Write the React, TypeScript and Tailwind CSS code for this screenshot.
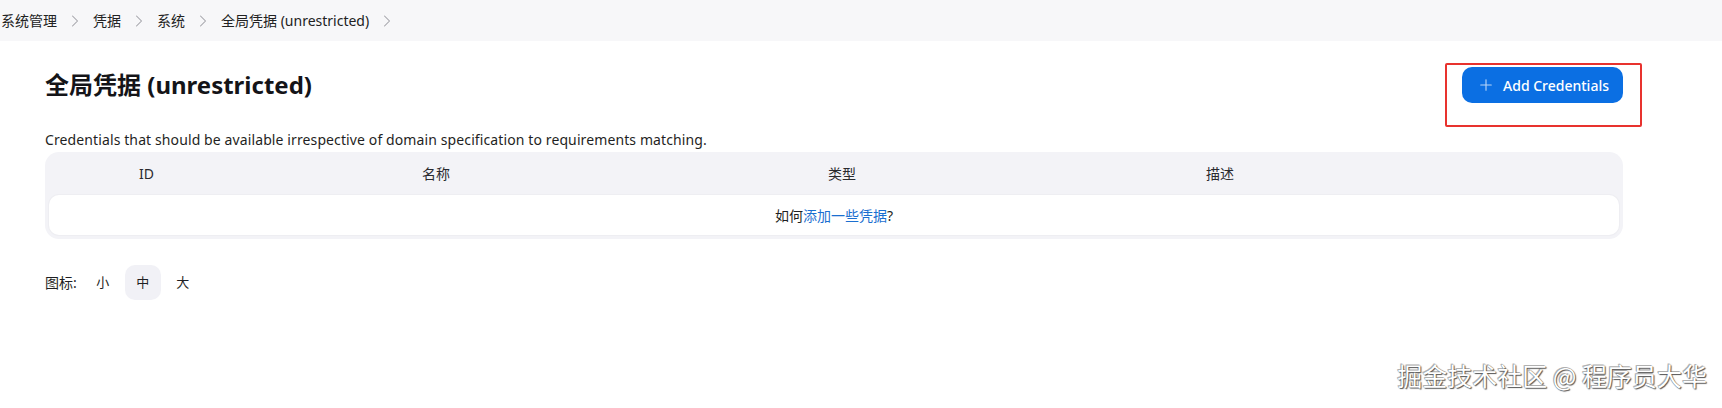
import React from "react";
import { ChevronRight, Plus } from "lucide-react";

const crumbs = ["系统管理", "凭据", "系统", "全局凭据 (unrestricted)"];

export default function App() {
  return (
    <div
      className="relative w-full h-[408px] bg-white text-[#1f1f23] overflow-hidden"
      style={{ fontFamily: '"Noto Sans", "Noto Sans CJK SC", sans-serif' }}
    >
      {/* breadcrumb */}
      <div className="h-[41px] bg-[#f7f7f9] flex items-center gap-2 pl-[1px] text-[14px] text-[#222]">
        {crumbs.map((c) => (
          <React.Fragment key={c}>
            <span className="leading-none">{c}</span>
            <ChevronRight size={20} strokeWidth={1.25} className="text-[#a0a0a6]" />
          </React.Fragment>
        ))}
      </div>

      <div className="pl-[45px] pr-[99px]">
        {/* heading row */}
        <div className="flex items-start justify-between pt-[26px]">
          <h1 className="text-[24px] font-bold leading-[36px] text-[#141418]">
            全局凭据 (unrestricted)
          </h1>
          <div className="relative">
            <button className="h-[36px] rounded-[10px] bg-[#0b6fe3] flex items-center pl-[15px] pr-[14px] gap-2 text-white text-[14px] font-medium">
              <Plus size={18} strokeWidth={1.5} className="text-[#b9d6f8]" />
              <span>Add Credentials</span>
            </button>
            <div className="absolute left-[-17px] right-[-19px] top-[-4px] bottom-[-24px] border-2 border-[#e8322e] rounded-[2px] pointer-events-none" />
          </div>
        </div>

        {/* description */}
        <p className="mt-[27px] text-[14px] leading-[20px] tracking-[0.11px] text-[#1f1f23]">
          Credentials that should be available irrespective of domain specification to requirements matching.
        </p>

        {/* table */}
        <div className="mt-[2px] rounded-[14px] bg-[#f3f3f7] px-[4px] pb-[4px]">
          <div className="h-[43px] grid grid-cols-[90px_283px_406px_378px_1fr] items-center text-[14px] text-[#2a2a2e]">
            <div />
            <div>ID</div>
            <div>名称</div>
            <div>类型</div>
            <div>描述</div>
          </div>
          <div className="h-[40px] rounded-[10px] bg-white flex items-center justify-center text-[14px] text-[#1f1f23] shadow-[0_0_0_1px_#eeeef2]">
            <span>
              如何<a className="text-[#1b6fd0]">添加一些凭据</a>?
            </span>
          </div>
        </div>

        {/* icon size */}
        <div className="mt-[26px] flex items-center text-[14px]">
          <span className="mr-[8px]">图标:</span>
          <div className="flex gap-[4px] text-[13px]">
            <span className="w-[36px] h-[35px] flex items-center justify-center rounded-[10px]">小</span>
            <span className="w-[36px] h-[35px] flex items-center justify-center rounded-[10px] bg-[#f1f1f6]">中</span>
            <span className="w-[36px] h-[35px] flex items-center justify-center rounded-[10px]">大</span>
          </div>
        </div>
      </div>

      {/* watermark */}
      <div
        className="absolute right-[15px] top-[359px] text-[25px] leading-[32px] text-white whitespace-pre [text-shadow:0_0_1px_#555,1px_1px_1px_#555,-1px_-1px_0_#bbb]"
        style={{ fontFamily: '"Noto Sans CJK SC", sans-serif' }}
      >
        掘金技术社区 @ 程序员大华
      </div>
    </div>
  );
}
